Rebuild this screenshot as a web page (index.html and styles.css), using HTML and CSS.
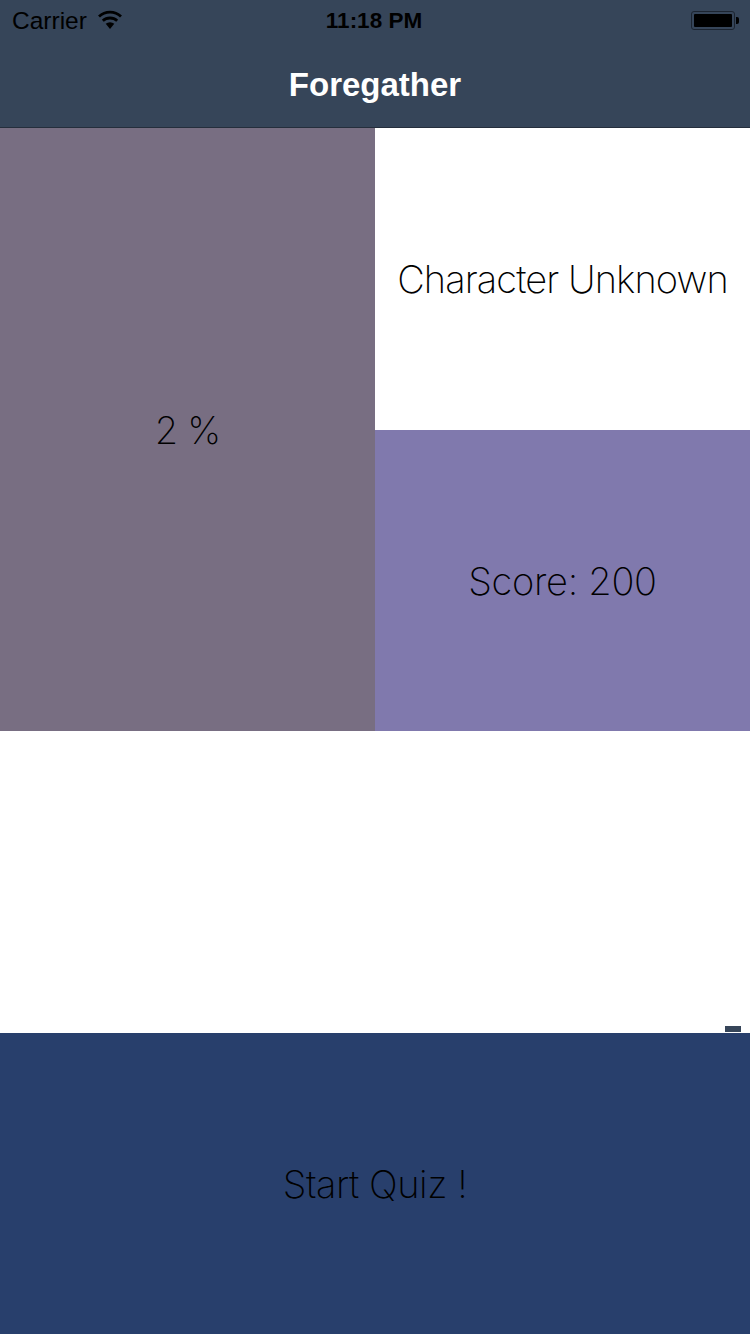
FILE: index.html
```html
<!DOCTYPE html>
<html lang="en">
<head>
    <meta charset="UTF-8">
    <meta name="viewport" content="width=device-width, initial-scale=1.0">
    <title>Foregather</title>
    <link rel="stylesheet" href="styles.css">
</head>
<body>
    <header class="nav">
        <div class="status">
            <div class="status-left">
                <span class="carrier">Carrier</span>
                <svg class="wifi" width="26" height="19" viewBox="0 0 26 19">
                    <path d="M13 19 L8.7 13.8 A6.6 6.6 0 0 1 17.3 13.8 Z" fill="#000"/>
                    <path d="M5.8 10.8 A10.6 10.6 0 0 1 20.2 10.8" fill="none" stroke="#000" stroke-width="2.8"/>
                    <path d="M2 6.6 A16 16 0 0 1 24 6.6" fill="none" stroke="#000" stroke-width="2.8"/>
                </svg>
            </div>
            <span class="clock">11:18 PM</span>
            <div class="status-right">
                <div class="battery"><div class="battery-fill"></div></div>
                <div class="battery-tip"></div>
            </div>
        </div>
        <h1 class="nav-title">Foregather</h1>
    </header>

    <main class="grid">
        <div class="tile tile-percent">2 %</div>
        <div class="tile tile-character">Character Unknown</div>
        <div class="tile tile-score">Score: 200</div>
    </main>

    <div class="blank"><span class="marker"></span></div>

    <button class="start" type="button">Start Quiz !</button>
</body>
</html>
```

FILE: styles.css
```css
html, body {
    margin: 0;
    padding: 0;
}

body {
    width: 750px;
    height: 1334px;
    overflow: hidden;
    display: flex;
    flex-direction: column;
    background-color: #fff;
    font-family: "Inter", "Liberation Sans", sans-serif;
    color: #000;
}

.nav {
    height: 127px;
    background-color: #364559;
    border-bottom: 1px solid #252e3c;
}

.status {
    height: 41px;
    padding: 0 11px 0 12px;
    display: flex;
    align-items: center;
    justify-content: space-between;
    position: relative;
    font-family: "Liberation Sans", Arial, sans-serif;
    font-size: 24.5px;
    color: #000;
}

.status-left {
    display: flex;
    align-items: center;
    gap: 10px;
}

.wifi {
    margin-top: -3px;
}

.clock {
    position: absolute;
    left: 0;
    right: 2px;
    text-align: center;
    font-size: 22.5px;
    font-weight: bold;
}

.status-right {
    display: flex;
    align-items: center;
    gap: 1px;
}

.battery {
    box-sizing: border-box;
    width: 44px;
    height: 19px;
    padding: 2px;
    border: 1px solid #1c2430;
    border-radius: 3px;
}

.battery-fill {
    height: 100%;
    background-color: #000;
    border-radius: 1px;
}

.battery-tip {
    width: 3px;
    height: 7px;
    background-color: #000;
    border-radius: 0 2px 2px 0;
}

.nav-title {
    margin: 0;
    height: 87px;
    line-height: 87px;
    text-align: center;
    font-family: "Liberation Sans", Arial, sans-serif;
    font-size: 33px;
    font-weight: bold;
    color: #fff;
}

.grid {
    height: 603px;
    display: grid;
    grid-template-columns: 375px 375px;
    grid-template-rows: 302px 301px;
}

.tile {
    display: flex;
    align-items: center;
    justify-content: center;
    font-weight: 200;
    font-size: 38px;
    letter-spacing: -0.8px;
}

.tile-percent {
    grid-row: 1 / span 2;
    background-color: #786e82;
}

.tile-character {
    background-color: #fff;
    letter-spacing: -0.92px;
}

.tile-score {
    background-color: #8079ad;
    letter-spacing: -0.3px;
}

.blank {
    height: 302px;
    position: relative;
}

.marker {
    position: absolute;
    right: 9px;
    bottom: 1px;
    width: 16px;
    height: 6px;
    background-color: #364559;
}

.start {
    height: 301px;
    border: none;
    padding: 0;
    background-color: #283f6c;
    color: #000;
    font-family: inherit;
    font-weight: 200;
    font-size: 38px;
    letter-spacing: -0.45px;
}
```
